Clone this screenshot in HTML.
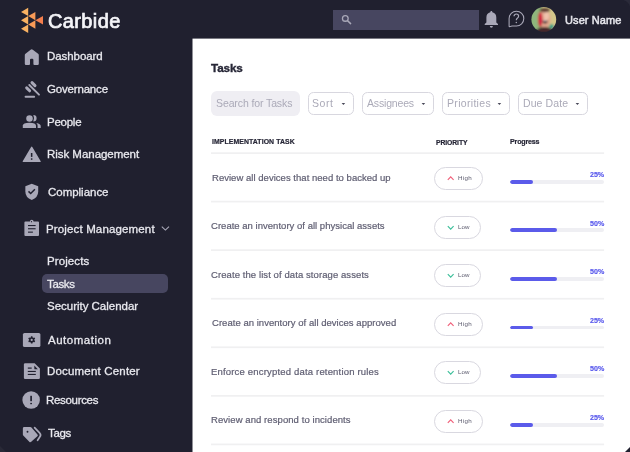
<!DOCTYPE html>
<html><head><meta charset="utf-8"><style>
html,body{margin:0;padding:0;width:630px;height:452px;overflow:hidden;background:#20202f;}
body{position:relative;font-family:"Liberation Sans",sans-serif;}
.abs{position:absolute;}
.t{position:absolute;white-space:nowrap;will-change:transform;}
.panel{position:absolute;left:192px;top:38.5px;width:438px;height:414px;background:#ffffff;}
</style></head><body>
<svg class="abs" style="left:0;top:0" width="630" height="452"><rect x="192.5" y="38.6" width="440" height="420" fill="#ffffff"/></svg>
<svg class="abs" style="left:0;top:0" width="60" height="40" viewBox="0 0 60 40"><polygon points="21.00,11.90 28.20,7.70 28.20,16.10" fill="#f9b262"/><polygon points="21.00,20.30 28.20,16.10 28.20,24.50" fill="#f9b262"/><polygon points="21.00,28.70 28.20,24.50 28.20,32.90" fill="#f9b262"/><polygon points="28.20,16.10 35.40,11.90 35.40,20.30" fill="#f89a57"/><polygon points="28.20,24.50 35.40,20.30 35.40,28.70" fill="#f89a57"/><polygon points="35.40,20.30 43.00,16.10 43.00,24.50" fill="#f47f4e"/></svg>
<div class="abs" style="left:41.8px;top:273.8px;width:126px;height:19.1px;border-radius:5px;background:#474660"></div>
<svg class="abs" style="left:0;top:0" width="192" height="452" viewBox="0 0 192 452" fill="#a9a8b8">
<path d="M31.7 49.3 Q32.3 49.3 32.8 49.7 L38.1 53.8 Q38.8 54.3 38.8 55.2 V63.8 Q38.8 65 37.6 65 H34.4 Q33.4 65 33.4 64 V59.9 Q33.4 58.8 32.3 58.8 H31.1 Q30 58.8 30 59.9 V64 Q30 65 29 65 H26 Q24.8 65 24.8 63.8 V55.2 Q24.8 54.3 25.5 53.8 L30.6 49.7 Q31.1 49.3 31.7 49.3 Z"/>
<g transform="translate(33.5,84.1) rotate(45)"><rect x="-3.6" y="-1.5" width="7.2" height="3" rx="1.5"/></g>
<g transform="translate(28.15,89.3) rotate(45)"><rect x="-3.6" y="-1.5" width="7.2" height="3" rx="1.5"/></g>
<path d="M29.3 85 L39 94.7" stroke="#a9a8b8" stroke-width="1.9" stroke-linecap="round"/>
<rect x="24.6" y="95.8" width="10.5" height="1.9" rx="0.95"/>
<circle cx="29.5" cy="118.4" r="3.25"/>
<path d="M22.8 128 V125.6 Q22.8 122.7 29.4 122.7 Q36 122.7 36 125.6 V128 Z"/>
<path d="M33.3 115.05 A3.3 3.25 0 0 1 33.3 121.55 A7.5 7.5 0 0 0 33.3 115.05 Z"/>
<path d="M36.3 123 Q40.7 123.8 40.7 126 V128 H37.6 V125.6 Q37.6 124.1 36.3 123 Z"/>
<path d="M31.7 146.5 Q32.1 146.5 32.3 146.9 L40.7 161.3 Q41 162 40.3 162 H23.1 Q22.4 162 22.7 161.3 L31.1 146.9 Q31.3 146.5 31.7 146.5 Z"/>
<rect x="30.9" y="153" width="1.5" height="3.9" fill="#20202f"/>
<rect x="30.9" y="158.3" width="1.5" height="1.5" fill="#20202f"/>
<path d="M31.75 183.8 L38.2 186.2 V191.5 Q38.2 197.5 31.75 200 Q25.35 197.5 25.35 191.5 V186.2 Z"/>
<path d="M28.5 191.4 L30.7 193.5 L34.9 189.3" fill="none" stroke="#20202f" stroke-width="1.5"/>
<path d="M25.4 221.6 H29.9 A1.85 1.85 0 0 1 33.6 221.6 H38 Q39 221.6 39 222.6 V235 Q39 236 38 236 H25.4 Q24.4 236 24.4 235 V222.6 Q24.4 221.6 25.4 221.6 Z"/>
<circle cx="31.5" cy="221.7" r="0.6" fill="#20202f"/>
<rect x="28" y="225" width="7.6" height="1.1" fill="#20202f"/>
<rect x="28" y="228.2" width="7.6" height="1.1" fill="#20202f"/>
<rect x="28" y="231.6" width="4.9" height="1.1" fill="#20202f"/>
<rect x="22.9" y="332.9" width="17.5" height="14.1" rx="1.6"/>
<g transform="translate(31.7,339.9)" fill="#20202f">
<circle r="2.6"/>
<rect x="-0.8" y="-3.6" width="1.6" height="7.2" rx="0.3"/>
<rect x="-0.8" y="-3.6" width="1.6" height="7.2" rx="0.3" transform="rotate(60)"/>
<rect x="-0.8" y="-3.6" width="1.6" height="7.2" rx="0.3" transform="rotate(120)"/>
<circle r="1.1" fill="#a9a8b8"/>
</g>
<path d="M25 363.2 H34.6 L39.9 368.4 V377.8 Q39.9 379 38.7 379 H25 Q23.9 379 23.9 377.8 V364.4 Q23.9 363.2 25 363.2 Z"/>
<path d="M34.3 365.5 L37.8 369.3 H35.2 Q34.3 369.3 34.3 368.4 Z" fill="#20202f"/>
<rect x="27.8" y="367.5" width="3.9" height="1.2" fill="#20202f"/>
<rect x="27.8" y="370.9" width="8" height="1.1" fill="#20202f"/>
<rect x="27.8" y="373.9" width="8" height="1.1" fill="#20202f"/>
<circle cx="31.15" cy="400.05" r="8.75"/>
<rect x="30.25" y="395.8" width="1.7" height="5.4" fill="#20202f"/>
<rect x="30.25" y="402.9" width="1.7" height="1.3" fill="#20202f"/>
<polygon points="24.26,428.4 30.4,428.4 36.4,435.3 30.3,440.8 24.26,434.5" stroke="#a9a8b8" stroke-width="2.8" stroke-linejoin="round"/>
<circle cx="27.5" cy="431.8" r="0.95" fill="#20202f"/>
<path d="M34.6 427.6 L39.8 433.2 Q41.3 434.9 39.9 436.7 L37.6 440.3" fill="none" stroke="#a9a8b8" stroke-width="1.7" stroke-linecap="round" stroke-linejoin="round"/>
<path d="M161.8 226.6 L165.4 230.1 L169 226.6" fill="none" stroke="#a9a8b8" stroke-width="1.1"/>
</svg>
<div class="abs" style="left:333px;top:10.4px;width:145.7px;height:19.7px;background:#474660"></div>
<svg class="abs" style="left:0;top:0" width="630" height="39" viewBox="0 0 630 39"><circle cx="345.3" cy="18.4" r="2.85" fill="none" stroke="#a9a8b8" stroke-width="1.3"/><path d="M347.6 20.7 L350.6 23.6" stroke="#a9a8b8" stroke-width="1.5" stroke-linecap="round"/><path d="M491.35 10.9 C492.1 10.9 492.4 11.5 492.4 12.3 C494.9 12.8 496.3 14.8 496.3 17.5 V22.6 L498 24 V25 H484.7 V24 L486.4 22.6 V17.5 C486.4 14.8 487.8 12.8 490.3 12.3 C490.3 11.5 490.6 10.9 491.35 10.9 Z" fill="#a9a8b8"/><path d="M489.8 25.9 H492.9 A1.55 1.8 0 0 1 489.8 25.9 Z" fill="#a9a8b8"/><path d="M509.1 26.3 V18.6 A7.35 7.35 0 1 1 516.4 25.9 H512.4 Q511.6 25.9 510.9 26.2 L509.9 26.6 Q509.1 26.9 509.1 26.3 Z" fill="none" stroke="#a9a8b8" stroke-width="1.05"/><path d="M514 16.3 Q514.2 14 516.4 14 Q518.6 14 518.6 16.1 Q518.6 17.5 517.3 18.3 Q516.3 19 516.3 20.3" fill="none" stroke="#a9a8b8" stroke-width="1.2"/><circle cx="516.3" cy="22.6" r="0.75" fill="#a9a8b8"/></svg>
<svg class="abs" style="left:0;top:0" width="630" height="39" viewBox="0 0 630 39"><defs><clipPath id="av"><circle cx="543.8" cy="19.45" r="12.4"/></clipPath><filter id="bl" x="-20%" y="-20%" width="140%" height="140%"><feGaussianBlur stdDeviation="1"/></filter></defs><g clip-path="url(#av)"><g filter="url(#bl)"><rect x="529" y="5" width="30" height="30" fill="#d3c68a"/><rect x="529" y="5" width="12.5" height="30" fill="#8fb67b"/><ellipse cx="545" cy="19" rx="5.6" ry="9" fill="#dfa48c"/><ellipse cx="546.5" cy="16" rx="2.6" ry="4" fill="#efc2ac"/><ellipse cx="540.2" cy="19.5" rx="2.2" ry="7.6" fill="#d3203f"/><ellipse cx="544.8" cy="10" rx="5.4" ry="2.2" fill="#5e3d33"/><ellipse cx="545" cy="21.7" rx="2.6" ry="1.7" fill="#3b1a1d"/><ellipse cx="545" cy="20.6" rx="1.8" ry="0.5" fill="#e8e0dc"/><ellipse cx="551.6" cy="26.4" rx="2.4" ry="2.2" fill="#2b9d86"/><ellipse cx="544.5" cy="32" rx="9" ry="5" fill="#45272a"/></g></g></svg>
<div class="abs" style="left:211.2px;top:91.2px;width:88.8px;height:24.6px;border-radius:6px;background:#efeef3"></div>
<div class="abs" style="left:307.8px;top:91.6px;width:46.1px;height:23.6px;border-radius:5.5px;border:1px solid #d8d7df;box-sizing:border-box"></div>
<svg class="abs" style="left:340.60px;top:101.5px" width="5" height="4" viewBox="0 0 5 4"><path d="M0.6 0.9 H4.2 L2.4 3.0 Z" fill="#4a495a"/></svg>
<div class="abs" style="left:361.8px;top:91.6px;width:72.6px;height:23.6px;border-radius:5.5px;border:1px solid #d8d7df;box-sizing:border-box"></div>
<svg class="abs" style="left:421.30px;top:101.5px" width="5" height="4" viewBox="0 0 5 4"><path d="M0.6 0.9 H4.2 L2.4 3.0 Z" fill="#4a495a"/></svg>
<div class="abs" style="left:441.9px;top:91.6px;width:68.0px;height:23.6px;border-radius:5.5px;border:1px solid #d8d7df;box-sizing:border-box"></div>
<svg class="abs" style="left:497.20px;top:101.5px" width="5" height="4" viewBox="0 0 5 4"><path d="M0.6 0.9 H4.2 L2.4 3.0 Z" fill="#4a495a"/></svg>
<div class="abs" style="left:518.3px;top:91.6px;width:69.6px;height:23.6px;border-radius:5.5px;border:1px solid #d8d7df;box-sizing:border-box"></div>
<svg class="abs" style="left:574.90px;top:101.5px" width="5" height="4" viewBox="0 0 5 4"><path d="M0.6 0.9 H4.2 L2.4 3.0 Z" fill="#4a495a"/></svg>
<svg class="abs" style="left:0;top:0" width="630" height="452"><rect x="211" y="152.3" width="393.1" height="1.7" fill="#f0f0f1"/><rect x="211" y="200.75" width="393.1" height="1.7" fill="#f0f0f1"/><rect x="211" y="249.31" width="393.1" height="1.7" fill="#f0f0f1"/><rect x="211" y="297.87" width="393.1" height="1.7" fill="#f0f0f1"/><rect x="211" y="346.43" width="393.1" height="1.7" fill="#f0f0f1"/><rect x="211" y="394.99" width="393.1" height="1.7" fill="#f0f0f1"/><rect x="211" y="443.55" width="393.1" height="1.7" fill="#f0f0f1"/></svg>
<div class="abs" style="left:434.1px;top:167.00px;width:48.7px;height:23px;border-radius:12px;border:1px solid #d9d8e0;box-sizing:border-box"></div>
<svg class="abs" style="left:446px;top:174.00px" width="10" height="8" viewBox="0 0 10 8"><path d="M1.8 5.8 L4.7 2.9 L7.6 5.8" fill="none" stroke="#f0607a" stroke-width="1.15"/></svg>
<div class="abs" style="left:509.8px;top:179.80px;width:94.3px;height:3.9px;border-radius:2px;background:#efeff3;overflow:hidden"><div style="width:25%;height:100%;background:#5b5bea;border-radius:2px"></div></div>
<div class="abs" style="left:434.1px;top:215.60px;width:47.1px;height:23px;border-radius:12px;border:1px solid #d9d8e0;box-sizing:border-box"></div>
<svg class="abs" style="left:446px;top:222.60px" width="10" height="8" viewBox="0 0 10 8"><path d="M1.8 3.2 L4.7 6.1 L7.6 3.2" fill="none" stroke="#3dbf9a" stroke-width="1.15"/></svg>
<div class="abs" style="left:509.8px;top:228.40px;width:94.3px;height:3.9px;border-radius:2px;background:#efeff3;overflow:hidden"><div style="width:50%;height:100%;background:#5b5bea;border-radius:2px"></div></div>
<div class="abs" style="left:434.1px;top:264.20px;width:47.1px;height:23px;border-radius:12px;border:1px solid #d9d8e0;box-sizing:border-box"></div>
<svg class="abs" style="left:446px;top:271.20px" width="10" height="8" viewBox="0 0 10 8"><path d="M1.8 3.2 L4.7 6.1 L7.6 3.2" fill="none" stroke="#3dbf9a" stroke-width="1.15"/></svg>
<div class="abs" style="left:509.8px;top:277.00px;width:94.3px;height:3.9px;border-radius:2px;background:#efeff3;overflow:hidden"><div style="width:50%;height:100%;background:#5b5bea;border-radius:2px"></div></div>
<div class="abs" style="left:434.1px;top:312.80px;width:48.7px;height:23px;border-radius:12px;border:1px solid #d9d8e0;box-sizing:border-box"></div>
<svg class="abs" style="left:446px;top:319.80px" width="10" height="8" viewBox="0 0 10 8"><path d="M1.8 5.8 L4.7 2.9 L7.6 5.8" fill="none" stroke="#f0607a" stroke-width="1.15"/></svg>
<div class="abs" style="left:509.8px;top:325.60px;width:94.3px;height:3.9px;border-radius:2px;background:#efeff3;overflow:hidden"><div style="width:25%;height:100%;background:#5b5bea;border-radius:2px"></div></div>
<div class="abs" style="left:434.1px;top:361.40px;width:47.1px;height:23px;border-radius:12px;border:1px solid #d9d8e0;box-sizing:border-box"></div>
<svg class="abs" style="left:446px;top:368.40px" width="10" height="8" viewBox="0 0 10 8"><path d="M1.8 3.2 L4.7 6.1 L7.6 3.2" fill="none" stroke="#3dbf9a" stroke-width="1.15"/></svg>
<div class="abs" style="left:509.8px;top:374.20px;width:94.3px;height:3.9px;border-radius:2px;background:#efeff3;overflow:hidden"><div style="width:50%;height:100%;background:#5b5bea;border-radius:2px"></div></div>
<div class="abs" style="left:434.1px;top:410.00px;width:48.7px;height:23px;border-radius:12px;border:1px solid #d9d8e0;box-sizing:border-box"></div>
<svg class="abs" style="left:446px;top:417.00px" width="10" height="8" viewBox="0 0 10 8"><path d="M1.8 5.8 L4.7 2.9 L7.6 5.8" fill="none" stroke="#f0607a" stroke-width="1.15"/></svg>
<div class="abs" style="left:509.8px;top:422.80px;width:94.3px;height:3.9px;border-radius:2px;background:#efeff3;overflow:hidden"><div style="width:25%;height:100%;background:#5b5bea;border-radius:2px"></div></div>
<div class="t" id="carbide" style="left:48.24px;top:10.995px;font-size:20.0px;line-height:20.0px;color:#f4f4f8;font-weight:400;letter-spacing:0.379px;-webkit-text-stroke:0.7px #f4f4f8;">Carbide</div>
<div class="t" id="n_dash" style="left:47.19px;top:50.865px;font-size:11.5px;line-height:11.5px;color:#e9e9ef;font-weight:400;letter-spacing:-0.066px;-webkit-text-stroke:0.3px #e9e9ef;">Dashboard</div>
<div class="t" id="n_gov" style="left:46.77px;top:83.865px;font-size:11.5px;line-height:11.5px;color:#e9e9ef;font-weight:400;letter-spacing:-0.179px;-webkit-text-stroke:0.3px #e9e9ef;">Governance</div>
<div class="t" id="n_people" style="left:47.22px;top:116.865px;font-size:11.5px;line-height:11.5px;color:#e9e9ef;font-weight:400;letter-spacing:-0.251px;-webkit-text-stroke:0.3px #e9e9ef;">People</div>
<div class="t" id="n_risk" style="left:46.74px;top:148.865px;font-size:11.5px;line-height:11.5px;color:#e9e9ef;font-weight:400;letter-spacing:-0.036px;-webkit-text-stroke:0.3px #e9e9ef;">Risk Management</div>
<div class="t" id="n_comp" style="left:47.73px;top:186.865px;font-size:11.5px;line-height:11.5px;color:#e9e9ef;font-weight:400;letter-spacing:-0.025px;-webkit-text-stroke:0.3px #e9e9ef;">Compliance</div>
<div class="t" id="n_pm" style="left:46.26px;top:223.865px;font-size:11.5px;line-height:11.5px;color:#e9e9ef;font-weight:400;letter-spacing:0.145px;-webkit-text-stroke:0.3px #e9e9ef;">Project Management</div>
<div class="t" id="n_projects" style="left:47.23px;top:255.865px;font-size:11.5px;line-height:11.5px;color:#e9e9ef;font-weight:400;letter-spacing:0.104px;-webkit-text-stroke:0.3px #e9e9ef;">Projects</div>
<div class="t" id="n_tasks" style="left:47.27px;top:278.865px;font-size:11.5px;line-height:11.5px;color:#e9e9ef;font-weight:400;letter-spacing:-0.361px;-webkit-text-stroke:0.3px #e9e9ef;">Tasks</div>
<div class="t" id="n_sec" style="left:47.37px;top:300.865px;font-size:11.5px;line-height:11.5px;color:#e9e9ef;font-weight:400;letter-spacing:-0.020px;-webkit-text-stroke:0.3px #e9e9ef;">Security Calendar</div>
<div class="t" id="n_auto" style="left:47.57px;top:334.865px;font-size:11.5px;line-height:11.5px;color:#e9e9ef;font-weight:400;letter-spacing:0.520px;-webkit-text-stroke:0.3px #e9e9ef;">Automation</div>
<div class="t" id="n_doc" style="left:46.75px;top:365.865px;font-size:11.5px;line-height:11.5px;color:#e9e9ef;font-weight:400;letter-spacing:0.181px;-webkit-text-stroke:0.3px #e9e9ef;">Document Center</div>
<div class="t" id="n_res" style="left:46.23px;top:394.865px;font-size:11.5px;line-height:11.5px;color:#e9e9ef;font-weight:400;letter-spacing:-0.321px;-webkit-text-stroke:0.3px #e9e9ef;">Resources</div>
<div class="t" id="n_tags" style="left:48.27px;top:427.865px;font-size:11.5px;line-height:11.5px;color:#e9e9ef;font-weight:400;letter-spacing:-0.314px;-webkit-text-stroke:0.3px #e9e9ef;">Tags</div>
<div class="t" id="username" style="left:564.87px;top:15.013px;font-size:11.0px;line-height:11.0px;color:#e6e6ec;font-weight:400;letter-spacing:0.104px;-webkit-text-stroke:0.5px #e6e6ec;">User Name</div>
<div class="t" id="title" style="left:210.99px;top:62.021px;font-size:11.7px;line-height:11.7px;color:#262636;font-weight:700;letter-spacing:-0.122px;-webkit-text-stroke:0.35px #262636;">Tasks</div>
<div class="t" id="search" style="left:216.11px;top:97.987px;font-size:10.5px;line-height:10.5px;color:#abaab8;font-weight:400;letter-spacing:-0.107px;">Search for Tasks</div>
<div class="t" id="b_sort" style="left:312.02px;top:97.987px;font-size:10.5px;line-height:10.5px;color:#abaab8;font-weight:400;letter-spacing:0.584px;">Sort</div>
<div class="t" id="b_assign" style="left:367.28px;top:97.987px;font-size:10.5px;line-height:10.5px;color:#abaab8;font-weight:400;letter-spacing:-0.169px;">Assignees</div>
<div class="t" id="b_prio" style="left:446.81px;top:97.987px;font-size:10.5px;line-height:10.5px;color:#abaab8;font-weight:400;letter-spacing:0.313px;">Priorities</div>
<div class="t" id="b_due" style="left:522.88px;top:97.987px;font-size:10.5px;line-height:10.5px;color:#abaab8;font-weight:400;letter-spacing:0.090px;">Due Date</div>
<div class="t" id="h_impl" style="left:211.55px;top:138.809px;font-size:6.9px;line-height:6.9px;color:#262636;font-weight:700;letter-spacing:0.082px;-webkit-text-stroke:0.2px #262636;">IMPLEMENTATION TASK</div>
<div class="t" id="h_prio" style="left:435.51px;top:139.869px;font-size:6.8px;line-height:6.8px;color:#262636;font-weight:700;letter-spacing:-0.085px;-webkit-text-stroke:0.2px #262636;">PRIORITY</div>
<div class="t" id="h_prog" style="left:509.56px;top:138.740px;font-size:7.1px;line-height:7.1px;color:#262636;font-weight:700;letter-spacing:-0.172px;-webkit-text-stroke:0.2px #262636;">Progress</div>
<div class="t" id="r0" style="left:211.62px;top:172.983px;font-size:9.5px;line-height:9.5px;color:#5f5e72;font-weight:400;letter-spacing:0.030px;-webkit-text-stroke:0.2px #5f5e72;">Review all devices that need to backed up</div>
<div class="t" id="r1" style="left:211.38px;top:220.983px;font-size:9.5px;line-height:9.5px;color:#5f5e72;font-weight:400;letter-spacing:0.023px;-webkit-text-stroke:0.2px #5f5e72;">Create an inventory of all physical assets</div>
<div class="t" id="r2" style="left:211.38px;top:269.983px;font-size:9.5px;line-height:9.5px;color:#5f5e72;font-weight:400;letter-spacing:0.085px;-webkit-text-stroke:0.2px #5f5e72;">Create the list of data storage assets</div>
<div class="t" id="r3" style="left:211.82px;top:317.983px;font-size:9.5px;line-height:9.5px;color:#5f5e72;font-weight:400;letter-spacing:0.035px;-webkit-text-stroke:0.2px #5f5e72;">Create an inventory of all devices approved</div>
<div class="t" id="r4" style="left:210.92px;top:366.983px;font-size:9.5px;line-height:9.5px;color:#5f5e72;font-weight:400;letter-spacing:0.181px;-webkit-text-stroke:0.2px #5f5e72;">Enforce encrypted data retention rules</div>
<div class="t" id="r5" style="left:210.78px;top:414.983px;font-size:9.5px;line-height:9.5px;color:#5f5e72;font-weight:400;letter-spacing:0.076px;-webkit-text-stroke:0.2px #5f5e72;">Review and respond to incidents</div>
<div class="t" id="pr0" style="left:458.43px;top:174.977px;font-size:6.2px;line-height:6.2px;color:#5c5b6e;font-weight:400;letter-spacing:0.310px;">High</div>
<div class="t" id="pc0" style="left:590.12px;top:171.740px;font-size:7.1px;line-height:7.1px;color:#5757ec;font-weight:700;letter-spacing:-0.023px;-webkit-text-stroke:0.15px #5757ec;">25%</div>
<div class="t" id="pr1" style="left:458.43px;top:223.977px;font-size:6.2px;line-height:6.2px;color:#5c5b6e;font-weight:400;letter-spacing:0.052px;">Low</div>
<div class="t" id="pc1" style="left:590.12px;top:220.740px;font-size:7.1px;line-height:7.1px;color:#5757ec;font-weight:700;letter-spacing:0.017px;-webkit-text-stroke:0.15px #5757ec;">50%</div>
<div class="t" id="pr2" style="left:458.43px;top:271.977px;font-size:6.2px;line-height:6.2px;color:#5c5b6e;font-weight:400;letter-spacing:0.052px;">Low</div>
<div class="t" id="pc2" style="left:590.12px;top:268.740px;font-size:7.1px;line-height:7.1px;color:#5757ec;font-weight:700;letter-spacing:0.017px;-webkit-text-stroke:0.15px #5757ec;">50%</div>
<div class="t" id="pr3" style="left:458.43px;top:320.977px;font-size:6.2px;line-height:6.2px;color:#5c5b6e;font-weight:400;letter-spacing:0.310px;">High</div>
<div class="t" id="pc3" style="left:590.12px;top:317.740px;font-size:7.1px;line-height:7.1px;color:#5757ec;font-weight:700;letter-spacing:-0.023px;-webkit-text-stroke:0.15px #5757ec;">25%</div>
<div class="t" id="pr4" style="left:458.43px;top:368.977px;font-size:6.2px;line-height:6.2px;color:#5c5b6e;font-weight:400;letter-spacing:0.052px;">Low</div>
<div class="t" id="pc4" style="left:590.12px;top:365.740px;font-size:7.1px;line-height:7.1px;color:#5757ec;font-weight:700;letter-spacing:0.017px;-webkit-text-stroke:0.15px #5757ec;">50%</div>
<div class="t" id="pr5" style="left:458.43px;top:417.977px;font-size:6.2px;line-height:6.2px;color:#5c5b6e;font-weight:400;letter-spacing:0.310px;">High</div>
<div class="t" id="pc5" style="left:590.12px;top:414.740px;font-size:7.1px;line-height:7.1px;color:#5757ec;font-weight:700;letter-spacing:-0.023px;-webkit-text-stroke:0.15px #5757ec;">25%</div>
<svg class="abs" style="left:0;top:0" width="630" height="452" viewBox="0 0 630 452"><path d="M623.5 0 H630 V6.5 Q628.5 1.5 623.5 0 Z" fill="#2a2a39"/><path d="M0 446 L6 452 H0 Z" fill="#292937"/><path d="M625 452 L630 447 V452 Z" fill="#20202f"/></svg>
</body></html>
